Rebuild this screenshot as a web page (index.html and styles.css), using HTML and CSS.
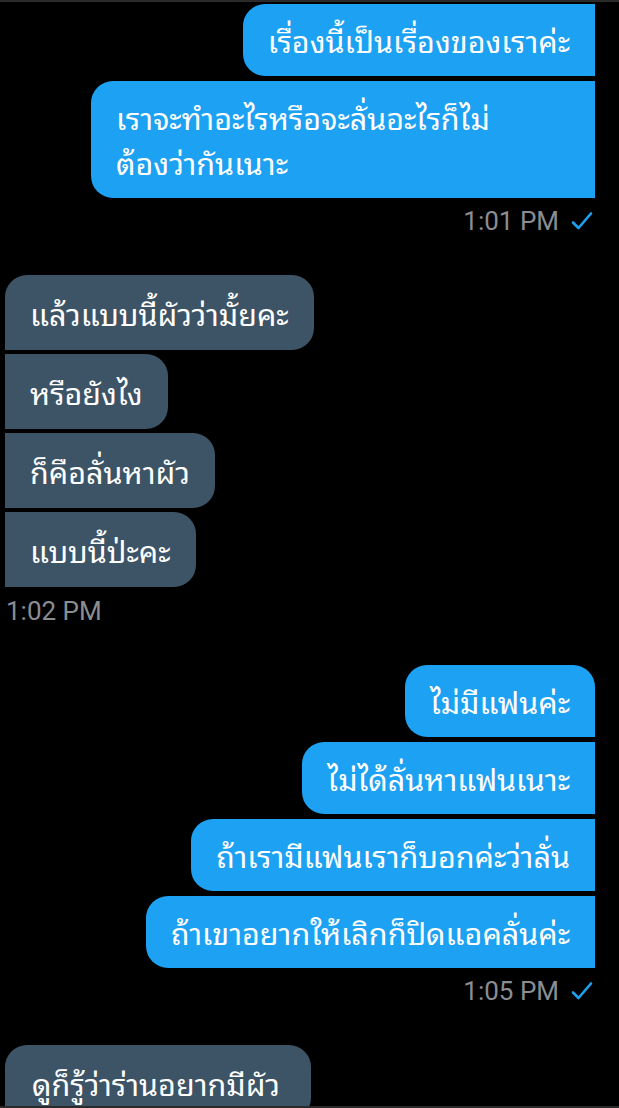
FILE: index.html
```html
<!DOCTYPE html>
<html lang="th">
<head>
<meta charset="utf-8">
<title>Chat</title>
<link rel="stylesheet" href="styles.css">
</head>
<body>
<main class="chat">
  <section class="group out">
    <div class="bubble">เรื่องนี้เป็นเรื่องของเราค่ะ</div>
    <div class="bubble wide">เราจะทำอะไรหรือจะลั่นอะไรก็ไม่<br>ต้องว่ากันเนาะ</div>
    <div class="meta"><span>1:01 PM</span><svg class="tick" viewBox="0 0 22 20"><path d="M2 11.5 L7.5 17 L20 2.5" fill="none" stroke="#1da1f2" stroke-width="2.6" stroke-linecap="round" stroke-linejoin="round"/></svg></div>
  </section>

  <section class="group in">
    <div class="bubble first">แล้วแบบนี้ผัวว่ามั้ยคะ</div>
    <div class="bubble">หรือยังไง</div>
    <div class="bubble">ก็คือลั่นหาผัว</div>
    <div class="bubble">แบบนี้ป่ะคะ</div>
    <div class="meta"><span>1:02 PM</span></div>
  </section>

  <section class="group out">
    <div class="bubble first">ไม่มีแฟนค่ะ</div>
    <div class="bubble">ไม่ได้ลั่นหาแฟนเนาะ</div>
    <div class="bubble">ถ้าเรามีแฟนเราก็บอกค่ะว่าลั่น</div>
    <div class="bubble">ถ้าเขาอยากให้เลิกก็ปิดแอคลั่นค่ะ</div>
    <div class="meta"><span>1:05 PM</span><svg class="tick" viewBox="0 0 22 20"><path d="M2 11.5 L7.5 17 L20 2.5" fill="none" stroke="#1da1f2" stroke-width="2.6" stroke-linecap="round" stroke-linejoin="round"/></svg></div>
  </section>

  <section class="group in">
    <div class="bubble first last">ดูก็รู้ว่าร่านอยากมีผัว</div>
  </section>
</main>
</body>
</html>
```

FILE: styles.css
```css
html, body {
  margin: 0;
  padding: 0;
  background: #000;
}
body {
  height: 1108px;
  overflow: hidden;
  border-top: 2px solid #2a2a2a;
  border-bottom: 2px solid #2a2a2a;
  box-sizing: border-box;
  font-family: "Noto Sans Thai Looped", "Noto Serif Thai", "Loma", "Garuda", "Norasi", "Kinnari", "Tlwg Typist", "Noto Sans Thai", "Noto Sans", sans-serif;
}
.chat {
  display: flex;
  flex-direction: column;
  gap: 36px;
  padding-top: 2px;
  height: 100%;
  overflow: hidden;
}
.group {
  display: flex;
  flex-direction: column;
  gap: 5px;
  flex-shrink: 0;
}
.group.out {
  align-items: flex-end;
  padding-right: 24px;
}
.group.in {
  align-items: flex-start;
  padding-left: 5px;
  gap: 4px;
}
.bubble {
  font-size: 30.5px;
  line-height: 45px;
  color: #fff;
  padding: 13px 25px 14px 25px;
  box-sizing: border-box;
}
.bubble.wide {
  width: 504px;
}
.out .bubble {
  background: #1da1f2;
  border-radius: 22px 0 0 22px;
}
.out .bubble.first {
  border-radius: 22px 22px 0 22px;
}
.in .bubble {
  background: #3d5466;
  border-radius: 0 22px 22px 0;
  padding-top: 15px;
  padding-bottom: 15px;
}
.in .bubble.first {
  border-radius: 22px 22px 22px 0;
}
.in .bubble.last {
  padding-left: 27px;
  padding-right: 31px;
}
.meta {
  display: flex;
  align-items: center;
  gap: 12px;
  font-family: Roboto, "Liberation Sans", sans-serif;
  font-size: 26px;
  line-height: 36px;
  color: #8a8d91;
}
.in .meta {
  margin-top: 2px;
  padding-left: 1px;
}
.tick {
  width: 22px;
  height: 20px;
  margin-right: 2px;
}
```
